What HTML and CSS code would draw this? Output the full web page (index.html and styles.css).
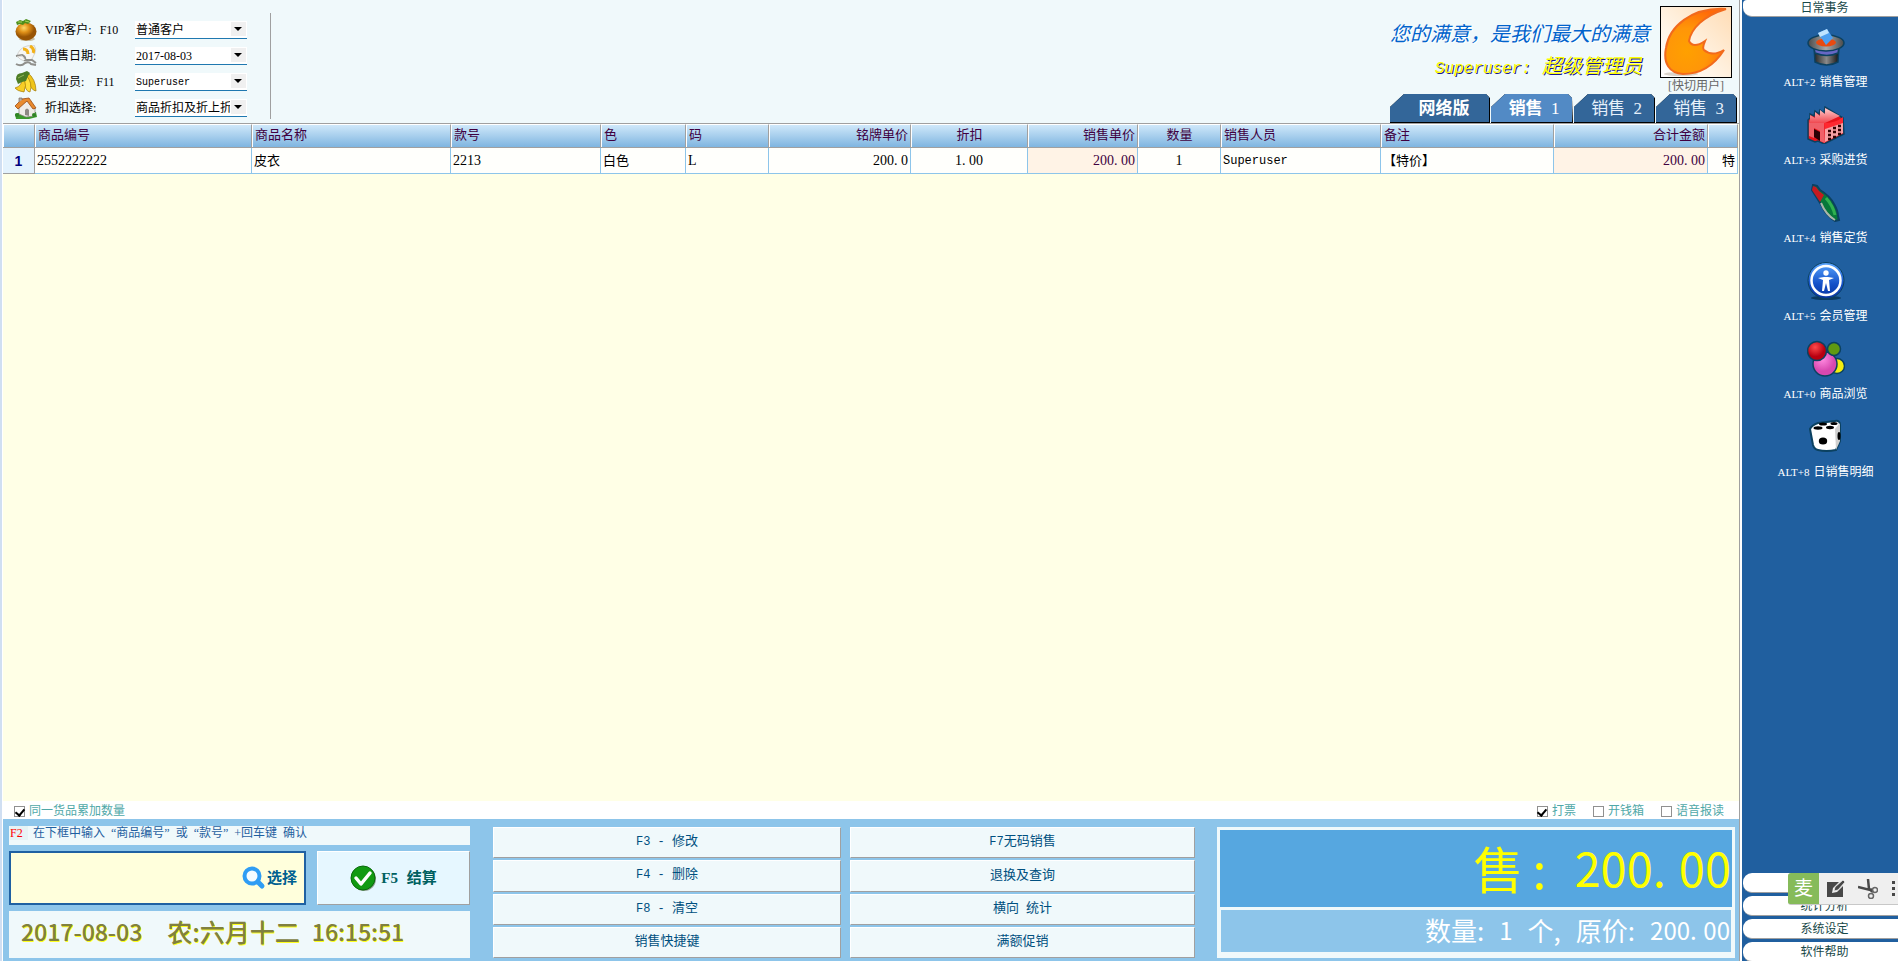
FILE: index.html
```html
<!DOCTYPE html>
<html lang="zh-CN">
<head>
<meta charset="utf-8">
<title>销售管理</title>
<link rel="stylesheet" href="styles.css">
</head>
<body>
<div class="app">
  <main class="main">
    <header class="top">
      <div class="fields">
        <svg class="ficon" viewBox="0 0 22 22"><defs><radialGradient id="or" cx=".4" cy=".3"><stop offset="0" stop-color="#ffd968"/><stop offset=".5" stop-color="#e09018"/><stop offset="1" stop-color="#985404"/></radialGradient></defs><ellipse cx="12" cy="20" rx="8" ry="2" fill="#c9bda0"/><ellipse cx="11" cy="12.500" rx="10.500" ry="9" fill="url(#or)"/><path d="M1 3l4-2 3 1 3-2 5 2-3 3-3-1-2 2-3-1-3 1z" fill="#4f8f1c"/><path d="M3 3l4 0M10 2l4 1" stroke="#a8d45a"/></svg>
        <label for="vip">VIP客户: <span class="fkey">F10</span></label>
        <span class="combo"><select id="vip"><option>普通客户</option></select></span>

        <svg class="ficon" viewBox="0 0 22 22"><path d="M2 11Q4 3 12 1l7-1q3 4 1 8l-3 6-6 3-6-3z" fill="#f6f6f4" stroke="#c4c4c0" stroke-width=".7"/><path d="M8 4q5 0 5 5M15 1q5 3 3 7" stroke="#f2b21a" stroke-width="3" fill="none"/><path d="M1 11l6-1q4 2 3 5l7 0 4 3M1 19q5 3 9-1 4-2 6 1l5 1" stroke="#8f8f8b" stroke-width="2" fill="none"/><path d="M2 12l5-1 3 4" stroke="#dededb" fill="none"/></svg>
        <label for="day">销售日期:</label>
        <span class="combo"><select id="day"><option>2017-08-03</option></select></span>

        <svg class="ficon" viewBox="0 0 22 22"><path d="M12 1q9 7 9 19-5 0-9-13z" fill="#efc51b" stroke="#a37b08" stroke-width=".7"/><path d="M11 4q7 8 4 17-5 0-6-13z" fill="#ffdf3a" stroke="#a37b08" stroke-width=".7"/><path d="M9 7q3 8 0 14-7-1-9-4 7-2 7-9z" fill="#f7cd25" stroke="#a37b08" stroke-width=".7"/><path d="M1 8q0-6 6-6l5-2 3 2-2 3-2 5-4 1-4 2z" fill="#4c7d25"/><path d="M3 7l6-3" stroke="#95b85a"/></svg>
        <label for="clerk">营业员: <span class="fkey far">F11</span></label>
        <span class="combo"><select id="clerk" class="latin"><option>Superuser</option></select></span>

        <svg class="ficon" viewBox="0 0 22 22"><path d="M0 17l7-2 14 0 1 5-8 2-13 0z" fill="#3a9a2c"/><path d="M4 10l8-7 8 8v8l-9 1-7-3z" fill="#efece8" stroke="#88827c" stroke-width=".7"/><path d="M10 18v-5q2-3 4 0v6z" fill="#8e8984"/><path d="M0 9L7 2l7-1 7 10-3 1-6-8-9 8z" fill="#e88a2e" stroke="#9b4a12" stroke-width=".8"/><path d="M4 5V1h3v2" fill="#b6ada6" stroke="#7a6a60" stroke-width=".7"/><circle cx="2" cy="18" r="2" fill="#2f8424"/><circle cx="19" cy="18" r="2" fill="#2f8424"/></svg>
        <label for="disc">折扣选择:</label>
        <span class="combo"><select id="disc"><option>商品折扣及折上折</option></select></span>
      </div>
      <div class="brand">
        <div class="brandrow">
          <div class="slogans">
            <p class="slogan">您的满意，是我们最大的满意</p>
            <p class="who"><span class="wholat">Superuser:</span> 超级管理员</p>
          </div>
          <div class="user">
            <svg class="logo" viewBox="0 0 70 70" preserveAspectRatio="none"><defs><linearGradient id="bg" x1="0" y1="1" x2="1" y2="0"><stop offset="0" stop-color="#fff"/><stop offset=".4" stop-color="#fff4e6"/><stop offset="1" stop-color="#ffdcb4"/></linearGradient><radialGradient id="fl" cx=".35" cy=".65" r=".7"><stop offset="0" stop-color="#ffa000"/><stop offset=".5" stop-color="#ff9608"/><stop offset="1" stop-color="#ff6a08"/></radialGradient></defs><rect width="70" height="70" fill="url(#bg)"/><ellipse cx="20" cy="67" rx="17" ry="2" fill="#d9d2c9"/><path d="M65 2C42 9 30 22 28 34Q32 42 44 34Q41 41 43 43Q51 50 63 43C56 54 43 67 22 67C8 66 2 56 5 41C8 20 30 0 65 2Z" fill="url(#fl)" stroke="#f26a1c" stroke-width="2"/></svg>
            <a class="switch" href="#">[快切用户]</a>
          </div>
        </div>
        <nav class="tabs">
          <button class="tab wide">网络版</button>
          <button class="tab on">销售 <span class="num">1</span></button>
          <button class="tab">销售 <span class="num">2</span></button>
          <button class="tab">销售 <span class="num">3</span></button>
        </nav>
      </div>
    </header>

    <section class="grid">
      <table class="items">
        <colgroup><col class="c0"><col class="c1"><col class="c2"><col class="c3"><col class="c4"><col class="c5"><col class="c6"><col class="c7"><col class="c8"><col class="c5"><col class="c9"><col class="c10"><col class="c11"><col class="c12"></colgroup>
        <thead><tr><th></th><th>商品编号</th><th>商品名称</th><th>款号</th><th>色</th><th>码</th><th class="r">铭牌单价</th><th class="c">折扣</th><th class="r">销售单价</th><th class="c">数量</th><th>销售人员</th><th>备注</th><th class="r">合计金额</th><th></th></tr></thead>
        <tbody><tr><td class="idx">1</td><td>2552222222</td><td>皮衣</td><td>2213</td><td>白色</td><td>L</td><td class="r">200<i class="dot">.</i>0</td><td class="c">1<i class="dot">.</i>00</td><td class="r hot">200<i class="dot">.</i>00</td><td class="c">1</td><td class="mono">Superuser</td><td>【特价】</td><td class="r hot">200<i class="dot">.</i>00</td><td class="r">特</td></tr></tbody>
      </table>
    </section>

    <div class="options">
      <label class="opt"><input type="checkbox" checked>同一货品累加数量</label>
      <div class="optset">
        <label class="opt"><input type="checkbox" checked>打票</label>
        <label class="opt"><input type="checkbox">开钱箱</label>
        <label class="opt"><input type="checkbox">语音报读</label>
      </div>
    </div>

    <section class="panel">
      <div class="entry">
        <label class="hint" for="code"><span class="key">F2</span>在下框中输入  “商品编号”  或  “款号”  +回车键  确认</label>
        <div class="entryrow">
          <div class="codebox">
            <input id="code" type="text">
            <button class="pick"><svg viewBox="0 0 24 24"><circle cx="10" cy="10" r="7.500" fill="#f4fbff" stroke="#2f9df4" stroke-width="4"/><path d="M16 16l4 4" stroke="#2f9df4" stroke-width="5" stroke-linecap="round"/></svg>选择</button>
          </div>
          <button class="pay"><svg viewBox="0 0 26 26"><circle cx="14" cy="14" r="12" fill="#8a9a8a"/><circle cx="13" cy="13" r="12" fill="#129a12" stroke="#0a6a0c"/><path d="M6 13l5 6L20 8" fill="none" stroke="#fff" stroke-width="3.500" stroke-linecap="round" stroke-linejoin="round"/></svg><span><span class="paykey">F5</span> 结算</span></button>
        </div>
        <div class="clock"><span class="dg date">2017-08-03</span><span>农:六月十二</span><span class="dg">16:15:51</span></div>
      </div>
      <div class="funcs">
        <button><span class="mono">F3 - </span>修改</button><button><span class="mono">F7</span>无码销售</button>
        <button><span class="mono">F4 - </span>删除</button><button>退换及查询</button>
        <button><span class="mono">F8 - </span>清空</button><button>横向<span class="mono"> </span>统计</button>
        <button>销售快捷键</button><button>满额促销</button>
      </div>
      <div class="totals">
        <div class="sum"><span>售<span class="colon">:</span></span><span class="dg">200<i class="dot">.</i>00</span></div>
        <div class="sub"><span>数量:</span><span class="dg">1</span><span>个,</span><span>原价:</span><span class="dg">200<i class="dot">.</i>00</span></div>
      </div>
    </section>
  </main>

  <aside class="side">
    <button class="pill first">日常事务</button>
    <nav class="menu">
      <a href="#"><svg viewBox="0 0 38 38"><defs><linearGradient id="ht"><stop offset="0" stop-color="#222"/><stop offset=".5" stop-color="#8a8a8a"/><stop offset="1" stop-color="#111"/></linearGradient><linearGradient id="br"><stop offset="0" stop-color="#4a4a4a"/><stop offset=".5" stop-color="#a8a8a8"/><stop offset="1" stop-color="#4a4a4a"/></linearGradient></defs><g stroke="#0b4160" stroke-width="1.500"><path d="M7 18h25l-1 16q-11 6-23 0z" fill="url(#ht)"/><path d="M7 19h25l-1 6q-11 5-23 0z" fill="#6767c4"/><ellipse cx="19" cy="15" rx="18" ry="8" fill="url(#br)"/></g><ellipse cx="19" cy="14.500" rx="10" ry="4" fill="#e84a10"/><path d="M11 5l9-4 6 9-7 7z" fill="#4c9ff0"/><path d="M11 5l9-4 2 4-9 4z" fill="#bfe4ff"/></svg>ALT+2 <b>销售管理</b></a>
      <a href="#"><svg viewBox="0 0 38 38"><defs><linearGradient id="fr" x1="0" y1="0" x2="0" y2="1"><stop offset="0" stop-color="#ffd0d0"/><stop offset="1" stop-color="#f04850"/></linearGradient></defs><path d="M1 33V14l2-2V8l4 2 1-5 4 3 1-4 4 3 1-6 18 11 1 16-20 10-6-3-3 1z" fill="#e8121a" stroke="#0b4160" stroke-width="1.500"/><path d="M3 13V9l5 3V6l5 4V4l5 4V2l15 8-15 7-16 0z" fill="url(#fr)"/><path d="M2 17h15l1 20-5-2V25l-6-3v10l-5-2z" fill="#f06068"/><path d="M7 23l6 3v9l-6-4z" fill="#2c0004"/><path d="M17 17q12 0 19-6v7l-18 5z" fill="#ff2830"/><path d="M18 23l18-6v10l-18 9z" fill="#f8a0a4"/><path d="M21 25h3M26 22h3M31 20h3M21 29h3M26 26h3M31 24h3M21 33h3M26 31h3M31 28h3" stroke="#300" stroke-width="2.500"/></svg>ALT+3 <b>采购进货</b></a>
      <a href="#"><svg viewBox="0 0 38 38"><path d="M6 1l4 1 3 4q10 6 14 14 4 7 4 12l1 4-4 1q-9-6-13-15L5 6z" fill="#07783a" stroke="#0b4160" stroke-width="2"/><path d="M6 2l3 1 3 4 5 4-4 7L5 6z" fill="#c41a20"/><path d="M14 19q5 12 14 17" stroke="#aab6aa" stroke-width="2" fill="none"/><path d="M19 14q7 8 9 17" stroke="#30b050" stroke-width="3" fill="none"/></svg>ALT+4 <b>销售定货</b></a>
      <a href="#"><svg viewBox="0 0 38 38"><defs><linearGradient id="bl" x1="0" y1="0" x2="0" y2="1"><stop offset="0" stop-color="#5aa6ff"/><stop offset=".6" stop-color="#1450c8"/><stop offset="1" stop-color="#0834a0"/></linearGradient></defs><ellipse cx="19" cy="36" rx="15" ry="2" fill="#0b3a60"/><circle cx="19" cy="18.500" r="18" fill="url(#bl)" stroke="#0b4160"/><circle cx="19" cy="18.500" r="14.500" fill="none" stroke="#fff" stroke-width="2.500"/><circle cx="19" cy="11" r="2.700" fill="#fff"/><path d="M11 16l6-1h4l6 1-5 2 1 11h-2l-2-8-2 8h-2l1-11z" fill="#fff"/></svg>ALT+5 <b>会员管理</b></a>
      <a href="#"><svg viewBox="0 0 38 38"><defs><radialGradient id="rd" cx=".4" cy=".3"><stop offset="0" stop-color="#ff4a4a"/><stop offset="1" stop-color="#b80010"/></radialGradient><radialGradient id="pk" cx=".4" cy=".3"><stop offset="0" stop-color="#ff8ae0"/><stop offset="1" stop-color="#d848b0"/></radialGradient></defs><g stroke="#0b4160" stroke-width="1.500"><circle cx="30" cy="26" r="7.500" fill="#f4ee10"/><circle cx="18" cy="24" r="12" fill="url(#pk)"/><circle cx="27" cy="9" r="6.500" fill="#5f9a12"/><circle cx="10" cy="11" r="9.500" fill="url(#rd)"/></g></svg>ALT+0 <b>商品浏览</b></a>
      <a href="#"><svg viewBox="0 0 38 38"><path d="M3 11Q5 7 11 5l17-2q5-1 5 4v16l-4 9q-10 2-18 0-4-1-5-5z" fill="#fff" stroke="#0b4160" stroke-width="2"/><path d="M28 11l5-6v18l-4 9z" fill="#d0d0d0"/><g fill="#000"><ellipse cx="16" cy="6" rx="4" ry="1.500"/><ellipse cx="27" cy="5.500" rx="3.500" ry="1.500"/><ellipse cx="11" cy="10" rx="4.500" ry="1.700"/><ellipse cx="23" cy="9.500" rx="4" ry="1.700"/><ellipse cx="16" cy="23" rx="4.200" ry="3.500"/><ellipse cx="32" cy="18" rx="1.500" ry="4"/></g></svg>ALT+8 <b>日销售明细</b></a>
    </nav>
    <div class="groups">
      <button class="pill" aria-label="更多"></button>
      <button class="pill">统计分析</button>
      <button class="pill">系统设定</button>
      <button class="pill">软件帮助</button>
      <div class="ime">
        <button class="imekey">麦</button>
        <button aria-label="手写"><svg viewBox="0 0 20 20"><path d="M1 3h12L7 9l-1 5 5-1 6-6v11H1z" fill="#484848"/><path d="M8 12l1-4 8-7 2 2-7 8z" fill="#484848" stroke="#ececec" stroke-width=".8"/></svg></button>
        <button aria-label="剪切"><svg viewBox="0 0 20 20"><path d="M10 0l1 10 4 3M0 8l12 3 2-1" stroke="#484848" stroke-width="2.500" fill="none"/><circle cx="17" cy="11" r="2.500" fill="none" stroke="#666" stroke-width="1.500"/><circle cx="13" cy="17" r="2.500" fill="none" stroke="#666" stroke-width="1.500"/></svg></button>
        <button aria-label="菜单"><svg viewBox="0 0 20 20" fill="#484848"><path d="M2 2h3v3H2zM8 2h3v3H8zM14 2h3v3h-3zM2 8h3v3H2zM8 8h3v3H8zM14 8h3v3h-3zM2 14h3v3H2zM8 14h3v3H8zM14 14h3v3h-3z"/></svg></button>
      </div>
    </div>
  </aside>
</div>
</body>
</html>
```
FILE: styles.css
```css
* { box-sizing: border-box; }
body { margin: 0; font: 12px/16px "Liberation Serif", "Noto Sans CJK SC", sans-serif; color: #000; }
button, input, select { font: inherit; margin: 0; border-radius: 0; }
button { cursor: pointer; border: 0; padding: 0; }
p { margin: 0; }
a { text-decoration: none; color: inherit; }

.app { display: flex; height: 100vh; overflow: hidden; background: #fff; border-left: 2px solid #d0dff2; }
.main { flex: 1; min-width: 0; display: flex; flex-direction: column; border-left: 1px solid #fff; border-right: 1px solid #a0a0a0; }
.mono { font-family: "Liberation Mono", monospace; font-size: 12px; white-space: pre; }

/* Header */
.top { display: flex; justify-content: space-between; height: 124px; background: #f0f9fb; border-bottom: 1px solid #a0a0a0; }
.fields { display: grid; grid-template-columns: 30px 90px 112px; grid-auto-rows: 26px; align-content: start; align-items: center; width: 268px; margin: 13px 0 4px; padding: 4px 0 0 12px; border-right: 1px solid #a0a0a0; }
.ficon { width: 22px; height: 22px; }
.fkey { padding-left: 5px; }
.fkey.far { padding-left: 9px; }
.combo { position: relative; display: block; height: 18px; background: #fff; border-bottom: 1px solid #1f78b0; }
.combo::before { content: ""; position: absolute; right: 1px; top: 1px; width: 15px; height: 14px; background: #f0f0f0; pointer-events: none; }
.combo::after { content: ""; position: absolute; right: 5px; top: 6px; border: 4px solid transparent; border-top-color: #000; border-bottom: 0; pointer-events: none; }
.combo select { appearance: none; width: 95px; height: 17px; line-height: 16px; border: 0; padding: 0 0 0 1px; background: transparent; overflow: hidden; text-overflow: clip; }
.combo .latin { font-family: "Liberation Mono", monospace; font-size: 10px; }

.brand { display: flex; flex-direction: column; justify-content: space-between; padding: 6px 2px 0 0; }
.brandrow { display: flex; justify-content: flex-end; gap: 10px; padding-right: 5px; }
.slogans { font-size: 20px; line-height: 32px; font-style: italic; text-align: right; padding-top: 12px; }
.slogan { color: #0063cc; text-shadow: 1px 1px #fff; }
.who { color: #ffff00; text-shadow: 1px 1px #1a1a90; padding-right: 8px; }
.wholat { font-family: "Liberation Mono", monospace; font-size: 16px; padding-right: 6px; }
.user { display: flex; flex-direction: column; align-items: center; }
.logo { width: 72px; height: 72px; border: 1px solid #000; }
.switch { color: #666; line-height: 16px; }
.tabs { display: flex; gap: 1px; justify-content: flex-end; }
.tab { width: 81px; height: 29px; padding: 0 0 0 4px; font-size: 17px; line-height: 28px; color: #e6f0fa; background: linear-gradient(#336699, #336699) 0 0 / calc(100% - 1px) calc(100% - 1px) no-repeat, #000; clip-path: polygon(0 13px, 14px 0, 77px 0, 81px 4px, 100% 100%, 0 100%); }
.tab.wide { width: 100px; padding-left: 8px; color: #fff; font-weight: bold; clip-path: polygon(0 13px, 14px 0, 96px 0, 100px 4px, 100% 100%, 0 100%); }
.tab.on { width: 82px; color: #fff; font-weight: bold; background-image: linear-gradient(#528ac5, #528ac5); }
.num { padding-left: 4px; font-weight: normal; }

/* Sales table */
.grid { flex: 1; background: #ffffe6; padding-right: 1px; }
.items { width: 100%; table-layout: fixed; border-collapse: separate; border-spacing: 0; font-size: 13px; line-height: 18px; }
.items th { height: 24px; padding: 0 2px 2px 3px; text-align: left; font-weight: normal; color: #400040; background: linear-gradient(#cfe8fa, #7fb5e0); border-right: 1px solid #a0a0a0; border-bottom: 1px solid #a0a0a0; border-top: 1px solid #fff; box-shadow: inset 1px 0 #fff; white-space: nowrap; }
.items td { height: 26px; padding: 0 2px; font-size: 14px; background: #fffffc; border-right: 1px solid #8dc5ea; border-bottom: 1px solid #8dc5ea; white-space: nowrap; overflow: hidden; }
.items td:nth-child(3), .items td:nth-child(5), .items td:nth-child(12), .items td:nth-child(14) { font-size: 13px; }
.items .r { text-align: right; }
.items .c { text-align: center; }
.items .hot { background: #fff3e6; color: #400040; }
.items .mono { font-size: 12px; }
.items .idx { text-align: center; font-family: "Liberation Sans", sans-serif; font-weight: bold; color: #000080; background: #e3f2fd; border-color: #a0a0a0; }
.c0 { width: 32px; } .c1 { width: 217px; } .c2 { width: 199px; } .c3 { width: 150px; }
.c4 { width: 85px; } .c5 { width: 83px; } .c6 { width: 142px; } .c7 { width: 117px; }
.c8 { width: 110px; } .c9 { width: 160px; } .c10 { width: 173px; } .c11 { width: 154px; } .c12 { width: 30px; }

/* Options */
.options { display: flex; justify-content: space-between; align-items: center; height: 18px; padding: 2px 15px 0 11px; color: #50a8a8; }
.optset { display: flex; gap: 17px; }
.opt { display: flex; align-items: center; gap: 4px; }
.opt input { appearance: none; width: 11px; height: 11px; background: #fff; border: 1px solid #909090; display: grid; place-items: center; }
.opt input:checked::after { content: ""; width: 4px; height: 7px; border: solid #000; border-width: 0 2px 2px 0; transform: rotate(40deg); }

/* Bottom panel */
.panel { display: grid; grid-template-columns: 461fr 703fr 518fr; gap: 22px; height: 142px; padding: 7px 4px 3px 6px; background: #8dc5ea; }
.entry { display: flex; flex-direction: column; gap: 6px; }
.hint { height: 19px; line-height: 14px; color: #1f5fa0; background: #f0f9fb; display: flex; align-items: flex-start; white-space: pre; }
.key { width: 18px; margin: 0 5px 0 1px; color: #f00; background: #e6f3f5; }
.entryrow { display: flex; gap: 11px; height: 54px; }
.codebox { flex: 297; min-width: 0; display: flex; align-items: center; background: #ffffdc; border: 2px solid #1f61a2; }
.codebox input { flex: 1; min-width: 0; height: 100%; border: 0; background: transparent; font-size: 20px; outline: 0; }
.pick { display: flex; align-items: center; gap: 1px; padding-right: 7px; background: none; color: #006090; font-size: 15px; font-weight: bold; }
.pick svg { width: 24px; height: 24px; }
.pay { flex: 153; display: flex; align-items: center; justify-content: center; gap: 5px; background: #e6f7ff; border: 1px solid #fff; border-right-color: #a0a0a0; border-bottom-color: #a0a0a0; color: #006060; font-size: 15px; font-weight: bold; }
.pay svg { width: 26px; height: 26px; }
.paykey { padding-right: 5px; }
.clock { flex: 1; display: flex; align-items: center; gap: 12px; padding: 0 0 7px 12px; background: #f0f9fb; color: #808040; text-shadow: 1px 1px #ffff20; font: 500 25px/30px "Noto Sans CJK SC", sans-serif; }
.clock .dg { font-size: 23px; }
.clock .date { padding-right: 13px; }
.funcs { display: grid; grid-template-columns: 348fr 345fr; grid-auto-rows: 1fr; column-gap: 9px; row-gap: 2px; padding: 1px 0 0 1px; }
.funcs button { background: #f0f9fb; border: 1px solid #fff; border-right-color: #a0a0a0; border-bottom-color: #a0a0a0; color: #005080; font-size: 13px; padding-bottom: 2px; }
.totals { display: flex; flex-direction: column; gap: 3px; margin-top: 1px; padding: 3px 3px 6px; background: #f0f9fb; color: #fff; font: 26px/32px "Noto Sans CJK SC", sans-serif; }
.sum, .sub { display: flex; justify-content: flex-end; align-items: center; }
.sum { flex: 78; background: #56a7e0; color: #ffff00; font-size: 50px; line-height: 60px; gap: 28px; padding: 0 1px 4px 0; }
.sum .dg { font-size: 47px; }
.colon { padding-left: 9px; }
.sub { flex: 41; background: #8dc5ea; gap: 15px; padding: 0 1px 3px 0; margin: 0 1px; }
.sub .dg { font-size: 24px; }
.dot { display: inline-block; width: 1ch; font-style: normal; text-align: left; }

/* Sidebar */
.side { width: 158px; flex: none; display: flex; flex-direction: column; background: #205f9f; border-left: 2px solid #fff; color: #fff; }
.pill { display: block; width: 155px; height: 20px; margin-left: 1px; padding-left: 8px; line-height: 18px; color: #184848; background: #fff; border-bottom: 1px solid #a0a0a0; border-radius: 9px 0 0 9px; }
.pill.first { height: 17px; line-height: 14px; border-radius: 4px 0 0 9px; }
.menu { flex: 1; display: flex; flex-direction: column; padding: 11px 0 0 11px; }
.menu a { height: 78px; display: grid; grid-template-columns: auto auto; justify-content: center; align-content: start; column-gap: 4px; font-size: 11px; line-height: 18px; }
.menu svg { grid-column: 1 / 3; justify-self: center; width: 38px; height: 38px; margin-bottom: 7px; }
.menu b { font-size: 12px; font-weight: normal; }
.groups { position: relative; display: flex; flex-direction: column; gap: 3px; margin-bottom: -1px; }
.ime { position: absolute; top: 0; right: 0; width: 110px; height: 32px; display: flex; gap: 12px; overflow: hidden; background: #efefef; border-bottom: 1px solid #c8c8c8; border-radius: 3px 0 0 3px; }
.ime button { flex: none; background: none; width: 20px; display: grid; place-items: center; }
.ime svg { width: 20px; height: 20px; }
.ime .imekey { width: 31px; margin-right: -5px; background: #86bb5a; color: #fff; font-size: 19px; }
```
